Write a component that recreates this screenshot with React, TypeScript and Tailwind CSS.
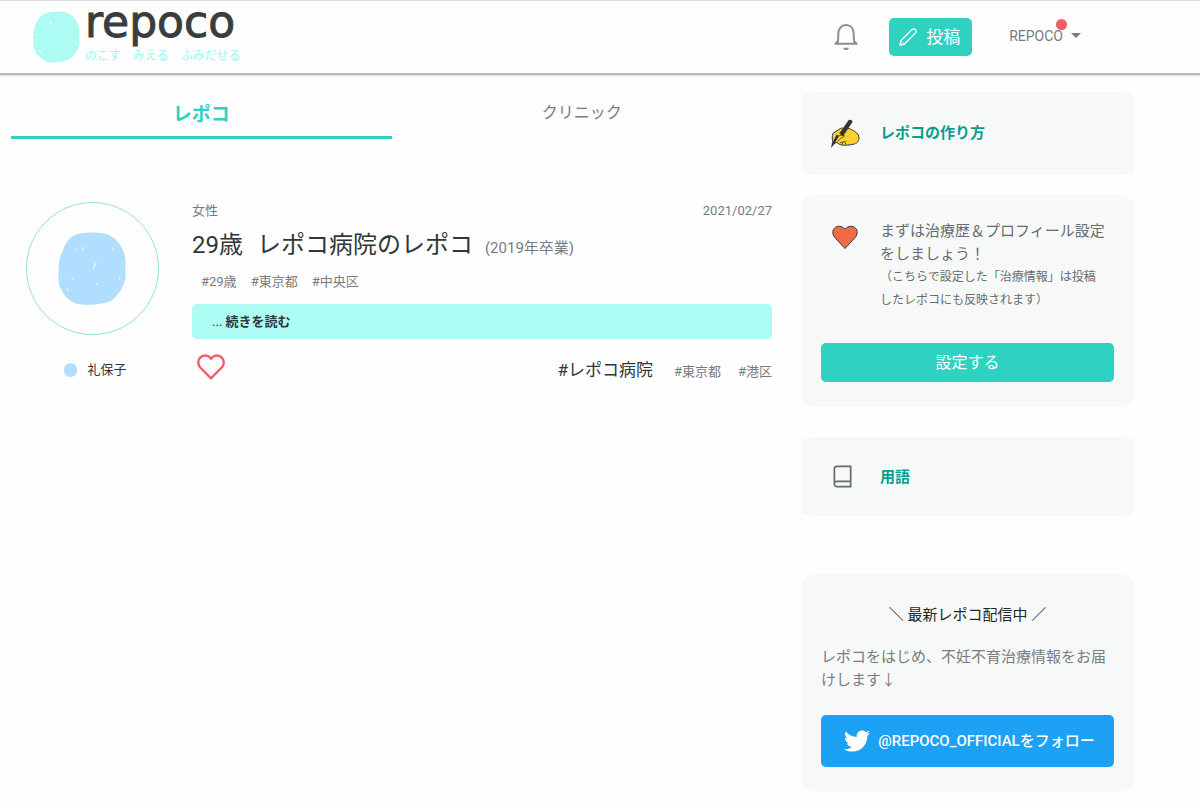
import type { ReactNode } from "react";
import { FaTwitter } from "react-icons/fa";

function LogoMark() {
  return (
    <svg viewBox="0 0 47 52" className="mt-[10px] h-[52px] w-[47px]" aria-hidden="true">
      <path
        d="M15 1.5C20 .2 28 .2 33 1.6C39 3.6 43.5 9 45.5 15C46.8 20 46.4 26 46.5 31.5C46 37 43 42 39.500 45.500C36.500 48.500 34 49.700 31.500 50C26 51.200 18 52.400 13 50.500C8 48.500 5 44.500 2.500 40.500C0 36.500 .3 33 .4 29C.4 25 0 21.500 1.200 17.500C3 11 7 3.500 15 1.500Z"
        fill="#acfcf3"
      />
      <path d="M17 13l1.200-2.200M6.500 39.500l1 1.300M43 32.500v.8M4 24l.7-.7" stroke="#f1fffd" strokeWidth="1.300" strokeLinecap="round" />
    </svg>
  );
}

function BellIcon() {
  return (
    <svg viewBox="0 0 24 27" className="h-[27px] w-6" fill="none" stroke="#8b9093" strokeWidth="2" aria-hidden="true">
      <path d="M.5 19.700H23.500M3.200 19.500C4.300 17.500 4.300 14.500 4.300 10C4.300 4.500 7.500 1.100 12 1.100S19.700 4.500 19.700 10C19.700 14.500 19.700 17.500 20.800 19.500" />
      <path d="M3.200 17.500L1.700 19.700M20.800 17.500l1.500 2.200" />
      <path d="M9 23.700C9.500 26.800 14.500 26.800 15 23.700Z" fill="#8b9093" stroke="none" />
    </svg>
  );
}

function PencilIcon() {
  return (
    <svg viewBox="0 0 18 18" className="size-[18px]" fill="none" stroke="currentColor" strokeWidth="1.300" strokeLinejoin="round" aria-hidden="true">
      <path d="M1 17L2 12.600L12.500 2C14 .5 15.500 .7 16.400 1.600C17.300 2.500 17.500 4 16 5.500L5.400 16Z" />
      <path d="M2 12.600L5.400 16" strokeWidth=".6" />
    </svg>
  );
}

function WritingHandIcon() {
  return (
    <svg viewBox="0 0 30 30" className="size-[30px]" aria-hidden="true">
      <path
        d="M3.500 24.500C1.800 21 2 16.500 3 14.300L10.500 9.500C12.500 8.500 14 9 14 10.500L17 9.200C20.500 9.500 23 11.200 25.500 13C29 15.500 29.500 18.500 28.500 21.500C27.500 24.500 24 25.300 20.500 25.800C17 26.300 12 26.400 9.500 25.500L7 23.500Z"
        fill="#fbd028"
        stroke="#353535"
        strokeWidth="1"
      />
      <path d="M8.500 17.200C10.500 15.800 12.500 16 14.300 16.800C13.500 18.800 10.500 18.500 9.300 20.700L7.500 22.500M9.500 24.500C11 23 13 22.700 16 22.800M12.500 25.500v-2M15.500 25.500v-2" fill="none" stroke="#353535" strokeWidth=".8" />
      <path d="M20.500 25C23 24 25 24 27.500 22.500C26.500 25 23.500 25 20.500 25Z" fill="#f28a2e" />
      <path d="M18.500 1.200C19.500 -.2 23 1.400 22.500 3L13 17.300L9.300 14.400Z" fill="#303437" />
      <path d="M9 17L4.200 25.300L1 29L2 24.300L6.700 15.500Z" fill="#303437" />
    </svg>
  );
}

function BookIcon() {
  return (
    <svg viewBox="0 0 20 24" className="h-[23px] w-5" fill="none" stroke="#666b6b" strokeWidth="1.800" aria-hidden="true">
      <path d="M3.500 1.500H18V22.500H3.500C2 22.500 1 21.500 1 20V4C1 2.500 2 1.500 3.500 1.500ZM1.300 18.500C1.700 17.300 2.500 17 3.500 17H18" />
    </svg>
  );
}

function Card({ className, children }: { className: string; children: ReactNode }) {
  return <section className={`rounded-[5%] bg-[#f7f9f8] px-5 ${className}`}>{children}</section>;
}

export default function App() {
  return (
    <div className="min-h-screen bg-[#fefefe] font-['Roboto','Noto_Sans_CJK_JP',sans-serif] text-[13px] text-[#777c80]">
      <header className="flex h-[75px] items-start justify-between border-t border-b-2 border-t-[#dcdce0] border-b-[#b9b9b9] bg-[#fefefe] pr-[119px] pl-[33px] shadow-sm">
        <a href="#" className="flex items-start gap-[5px]">
          <LogoMark />
          <span className="flex flex-col">
            <span className="font-['DejaVu_Sans',sans-serif] text-[44px] leading-[42px] text-[#393d3e] [-webkit-text-stroke:1px_#393d3e]">repoco</span>
            <span className="mt-[5px] text-[12px] leading-4 font-medium text-[#a6faf1]">のこす　みえる　ふみだせる</span>
          </span>
        </a>
        <nav className="flex items-start">
          <button type="button" aria-label="お知らせ" className="mt-[23px] mr-[31px]">
            <BellIcon />
          </button>
          <button type="button" className="mt-[17px] flex h-[38px] w-[83px] items-center gap-[9px] rounded-[5px] bg-[#2fd1c1] pl-[10px] text-[17px] text-white">
            <PencilIcon />
            <span className="leading-6">投稿</span>
          </button>
          <button type="button" className="relative mt-[25px] ml-[37px] flex items-center gap-2 text-[14px] leading-5">
            REPOCO
            <span className="absolute -top-[7px] left-[47px] size-[11px] rounded-full bg-[#ee5f69]" />
            <svg viewBox="0 0 10 5" className="mb-[2px] h-[5px] w-[10px]" aria-hidden="true">
              <path d="M0 0H10L5 5Z" fill="#777c80" />
            </svg>
          </button>
        </nav>
      </header>

      <main className="flex items-start gap-[29px] pr-[66px] pb-[14px] pl-[11px]">
        <div className="min-w-0 flex-1">
          <nav className="grid grid-cols-2 text-center">
            <a href="#repoco" className="h-16 border-b-[3px] border-[#2fd1c1] pt-[26px] text-[19px] leading-7 font-bold text-[#2fd1c1]">
              レポコ
            </a>
            <a href="#clinic" className="pt-[26px] text-[16px] leading-6">クリニック</a>
          </nav>

          <article className="mt-[63px] flex pl-[15px]">
            <div className="w-[133px] shrink-0">
              <div className="flex size-[133px] items-center justify-center rounded-full border border-[#8be3dc] pr-[2px]">
                <svg viewBox="0 0 68 73" className="h-[73px] w-[68px]" aria-hidden="true">
                  <path
                    d="M20 2C27 0 41 0 48 2C57 5 63 12 66 21C68 27 67.500 36 67.500 45C66.500 53 62 61 56.500 66C53 69.500 49 70.800 46 71C38 73 27 73.300 19 72C11 69 6 64 3 57C0 52 .5 47 .5 39C0 32 2 24 5 18C8 10 12 4 20 2Z"
                    fill="#b0defe"
                  />
                  <path d="M24.500 18l1-2.500M35.500 36l2.500-5M18 17l.8-.5M9.500 57l1 1.500M14 48l.4-1M61.500 47l.6-2M38.500 52.500l.6-.6M55 17l1 1.200" stroke="#edf8ff" strokeWidth="1.200" strokeLinecap="round" />
                </svg>
              </div>
              <p className="mt-[23px] flex items-center justify-center gap-[10px] pl-[6px] leading-6 text-[#303637]">
                <svg viewBox="0 0 13 14" className="h-[14px] w-[13px]" aria-hidden="true">
                  <path d="M4 .5C6 0 8 0 9.500 .7C12 2 13 4 13 7.500C13 10 11.500 12.500 9 13.500C7 14 5 14 3.500 13.500C1 12.500 0 10 0 7.500C0 4 1 1.500 4 .5Z" fill="#b0defe" />
                </svg>
                礼保子
              </p>
            </div>
            <div className="ml-[33px] min-w-0 flex-1">
              <div className="flex justify-between leading-[18px]">
                <span>女性</span>
                <time dateTime="2021-02-27">2021/02/27</time>
              </div>
              <h1 className="mt-[7px] flex items-baseline text-[24px] leading-9 text-[#303637]">
                <span>29歳</span>
                <span className="ml-[14px]">レポコ病院のレポコ</span>
                <small className="ml-3 text-[15px] text-[#777c80]">(2019年卒業)</small>
              </h1>
              <ul className="mt-[6px] flex gap-[14px] pl-[9px] leading-5">
                <li>#29歳</li>
                <li>#東京都</li>
                <li>#中央区</li>
              </ul>
              <a href="#more" className="mt-3 block h-[35px] rounded-[5px] bg-[#acfcf3] pl-5 leading-[35px] text-[#303637]">
                ... <b>続きを読む</b>
              </a>
              <div className="mt-[15px] flex items-start justify-between pl-[5px]">
                <button type="button" aria-label="いいね">
                  <svg viewBox="0 0 28 26" className="h-[26px] w-7" fill="none" stroke="#ee5f69" strokeWidth="2.400" aria-hidden="true">
                    <path d="M14 24.300L3.300 13.500C.5 10.500 .7 6 3.200 3.600C5.800 1 10 .9 12.500 3.200L14 4.700L15.500 3.200C18 .9 22.200 1 24.800 3.600C27.300 6 27.500 10.500 24.700 13.500Z" />
                  </svg>
                </button>
                <p className="flex items-baseline leading-8">
                  <span className="text-[17px] text-[#303637]">#レポコ病院</span>
                  <span className="ml-[21px]">#東京都</span>
                  <span className="ml-[17px]">#港区</span>
                </p>
              </div>
            </div>
          </article>
        </div>

        <aside className="w-[333px] shrink-0 pt-[17px] text-[15px]">
          <Card className="flex h-[83px] items-center gap-5 pl-[29px]">
            <WritingHandIcon />
            <a href="#howto" className="font-bold text-[#059e8e]">レポコの作り方</a>
          </Card>

          <Card className="mt-5 pt-[25px] pb-[25px]">
            <div className="flex items-start pr-[6px] pl-[11px]">
              <svg viewBox="0 0 27 25" className="mt-[5px] mr-[22px] h-[25px] w-[26px] shrink-0" aria-hidden="true">
                <path d="M13.500 24L3 12.500C.2 9.300 .2 5.300 2.500 2.800C5.500 -.1 10.500 .2 13.500 4C16.500 .2 21.500 -.1 24.500 2.800C26.800 5.300 26.800 9.300 24 12.500Z" fill="#f36b46" stroke="#333" strokeWidth="1" />
              </svg>
              <p className="leading-[23px] text-[#666c70]">
                まずは治療歴＆プロフィール設定をしましょう！
                <small className="block pr-2 text-[12px]">（こちらで設定した「治療情報」は投稿したレポコにも反映されます）</small>
              </p>
            </div>
            <button type="button" className="mt-[31px] block h-[39px] w-full rounded-[5px] bg-[#2fd1c1] text-[16px] text-white">
              設定する
            </button>
          </Card>

          <Card className="mt-[30px] flex h-[79px] items-center gap-[27px] pl-8">
            <BookIcon />
            <a href="#terms" className="pt-[2px] font-bold text-[#059e8e]">用語</a>
          </Card>

          <Card className="mt-[58px] pt-[29px] pb-[25px]">
            <h2 className="text-center leading-6 text-[#242829]">＼ 最新レポコ配信中 ／</h2>
            <p className="mt-[19px] leading-[23px]">レポコをはじめ、不妊不育治療情報をお届けします↓</p>
            <a href="#twitter" className="mt-[23px] flex h-[52px] items-center justify-center gap-2 rounded-[5px] bg-[#1da1f4] pl-1 font-medium text-white">
              <FaTwitter className="size-[26px]" />
              @REPOCO_OFFICIALをフォロー
            </a>
          </Card>
        </aside>
      </main>
    </div>
  );
}
